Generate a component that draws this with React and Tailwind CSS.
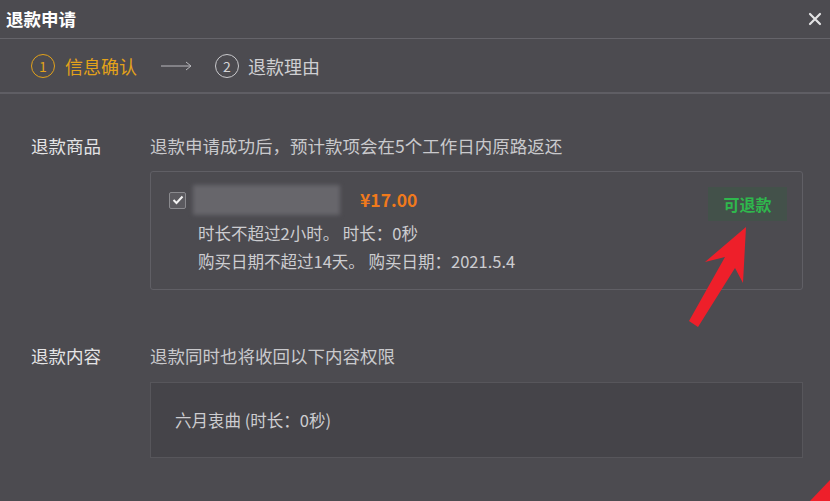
import React from 'react';

const font = { fontFamily: '"Noto Sans CJK SC", "Noto Sans", sans-serif' };

function StepArrow() {
    return (
        <svg width="32" height="12" viewBox="0 0 32 12" className="ml-[24px] mr-[22px]">
            <line x1="0" y1="6" x2="30" y2="6" stroke="#b9b9bd" strokeWidth="1" />
            <polyline points="25,2 30,6 25,10" fill="none" stroke="#b9b9bd" strokeWidth="1" />
        </svg>
    );
}

export default function App() {
    return (
        <div
            className="relative w-[830px] h-[501px] overflow-hidden bg-[#4c4b50] text-[#cfcfd2]"
            style={font}
        >
            {/* Header */}
            <div className="h-[39px] flex items-center justify-between pl-[6px] pr-[8px] border-b border-[#65646a]">
                <span className="text-[17.5px] font-bold text-white leading-none">退款申请</span>
                <svg width="14" height="14" viewBox="0 0 14 14">
                    <path d="M2 2 L12 12 M12 2 L2 12" stroke="#e2e2e4" strokeWidth="2.2" strokeLinecap="round" />
                </svg>
            </div>

            {/* Steps */}
            <div className="h-[55px] flex items-center pl-[31px] border-b-2 border-[#5f5e64]">
                <span className="w-[24px] h-[24px] rounded-full border-[1.5px] border-[#e3a21a] text-[#e3a21a] text-[14px] flex items-center justify-center leading-none">1</span>
                <span className="ml-[10px] text-[18px] text-[#e3a21a] leading-none">信息确认</span>
                <StepArrow />
                <span className="w-[24px] h-[24px] rounded-full border-[1.5px] border-[#c9c9cc] text-[#d4d4d6] text-[14px] flex items-center justify-center leading-none">2</span>
                <span className="ml-[9px] text-[18px] text-[#cfcfd2] leading-none">退款理由</span>
            </div>

            {/* Content */}
            <div className="pl-[31px] pr-[27px] pt-[40px]">
                {/* 退款商品 */}
                <div className="flex">
                    <div className="w-[119px] shrink-0 text-[17.5px] leading-[24px] text-[#e4e4e6]">退款商品</div>
                    <div className="flex-1">
                        <div className="text-[17.5px] leading-[24px] text-[#c9c9cc]">退款申请成功后，预计款项会在5个工作日内原路返还</div>
                        <div className="mt-[13px] h-[119px] border border-[#605f65] rounded-[3px] flex items-start justify-between pl-[18px] pr-[15px] pt-[13px]">
                            <div>
                                <div className="flex items-center h-[30px]">
                                    <span className="w-[17px] h-[17px] border border-[#8a8a8e] bg-[#5b5a5f] rounded-[2px] flex items-center justify-center">
                                        <svg width="12" height="10" viewBox="0 0 12 10">
                                            <path d="M1.5 5 L4.5 8 L10.5 1.5" fill="none" stroke="#f2f2f2" strokeWidth="2" />
                                        </svg>
                                    </span>
                                    <span className="ml-[7px] w-[147px] h-[30px] bg-[#67666b] blur-[2px]" />
                                    <span className="ml-[20px] text-[17.5px] font-bold text-[#f07a1c] leading-none">¥17.00</span>
                                </div>
                                <div className="pl-[29px] mt-[4px] text-[16.5px] leading-[28px] text-[#cdcdd0]">
                                    <div>时长不超过2小时。 时长：0秒</div>
                                    <div>购买日期不超过14天。 购买日期：2021.5.4</div>
                                </div>
                            </div>
                            <span className="mt-[2px] w-[79px] h-[34px] bg-[#43514a] text-[#2fb84d] text-[16px] font-bold flex items-center justify-center leading-none">可退款</span>
                        </div>
                    </div>
                </div>

                {/* 退款内容 */}
                <div className="flex mt-[54px]">
                    <div className="w-[119px] shrink-0 text-[17.5px] leading-[24px] text-[#e4e4e6]">退款内容</div>
                    <div className="flex-1">
                        <div className="text-[17.5px] leading-[24px] text-[#c9c9cc]">退款同时也将收回以下内容权限</div>
                        <div className="mt-[14px] h-[76px] bg-[#454449] border border-[#57565b] flex items-center pl-[24px] text-[16.5px] text-[#cdcdd0]">
                            六月衷曲 (时长：0秒)
                        </div>
                    </div>
                </div>
            </div>

            {/* Red annotation arrows */}
            <svg className="absolute inset-0 pointer-events-none" width="830" height="501" viewBox="0 0 830 501">
                <polygon
                    points="746,227 743,283 735,268 698,327 689,321 725,257 705,262"
                    fill="#ee1f2a"
                />
                <polygon points="830,480 830,501 810,501" fill="#ee1f2a" />
            </svg>
        </div>
    );
}
